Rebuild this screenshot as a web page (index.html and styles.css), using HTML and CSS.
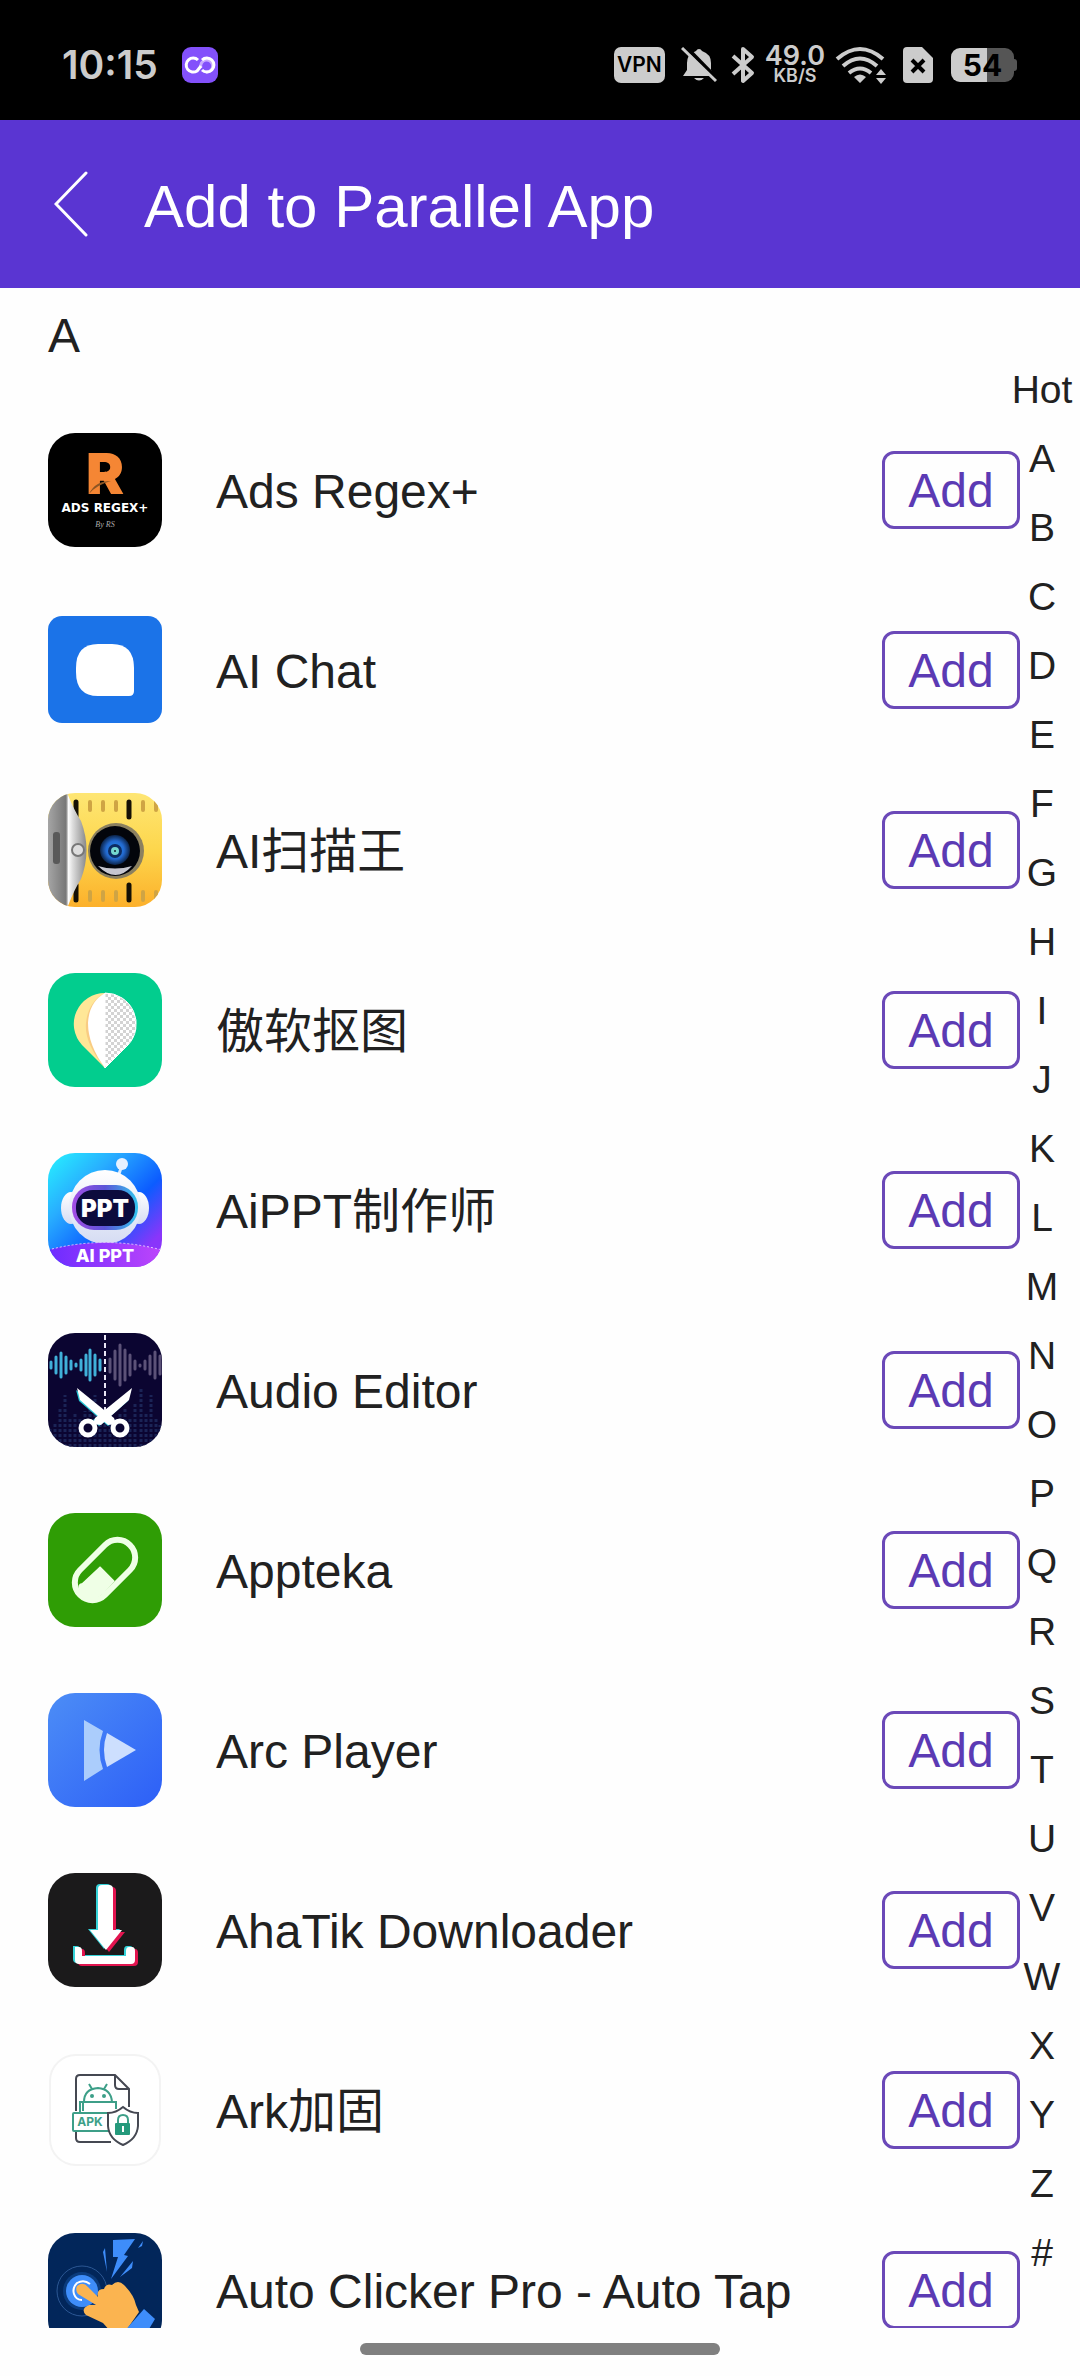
FILE: index.html
```
<!DOCTYPE html>
<html lang="en">

<head>
	<meta charset="UTF-8">
	<meta name="viewport" content="width=device-width, initial-scale=1.0">
	<title>Add to Parallel App</title>
	<link rel="stylesheet" href="styles.css">
</head>

<body>
	<!-- System status bar -->
	<div class="status-bar">
		<span class="clock">10:15</span>
		<svg class="status-app" width="36" height="36" viewBox="0 0 36 36">
			<rect width="36" height="36" rx="9" fill="#8351fb" />
			<g fill="none" stroke-width="3">
				<path d="M19 21a6 6 0 1 1 5 4" stroke="#c9abff" />
				<path d="M16 13a7 7 0 1 0-1 11l4-5" stroke="#fff" />
				<path d="M20 13a7 7 0 1 1 0 10" stroke="#fff" />
			</g>
		</svg>
		<div class="status-icons">
			<span class="vpn">VPN</span>
			<svg class="bell" width="36" height="36" viewBox="0 0 36 36">
				<path d="M18 2q2 0 3 2 9 3 9 12v7l3 6H2l4-6v-7q0-9 9-12 1-2 3-2z M13 31h10q-5 5-10 0z" fill="#ccc" />
				<path d="M3-2l34 35" stroke="#000" stroke-width="4" />
				<path d="M1 1l34 33" stroke="#ccc" stroke-width="3" />
			</svg>
			<svg class="bluetooth" width="24" height="38" viewBox="0 0 24 38">
				<path d="M2 10l19 17-9 8V3l9 8L2 28" fill="none" stroke="#ccc" stroke-width="4" stroke-linejoin="round" />
			</svg>
			<div class="speed">
				<span class="speed-value">49.0</span>
				<span class="speed-unit">KB/S</span>
			</div>
			<svg class="wifi" width="52" height="38" viewBox="0 0 52 38">
				<g fill="none" stroke="#ccc" stroke-width="4">
					<path d="M2 13q23-20 46 0" />
					<path d="M8 20q17-15 34 0" />
					<path d="M14 27q11-9 22 0" />
				</g>
				<path d="M19 31q6-5 12 0l-6 6z M46 23l5 6H41z M46 38l5-6H41z" fill="#ccc" />
			</svg>
			<svg class="sim" width="30" height="36" viewBox="0 0 30 36">
				<path d="M4 0h15l11 11v21q0 4-4 4H4q-4 0-4-4V4q0-4 4-4z" fill="#ccc" />
				<path d="M9 13l12 12M21 13L9 25" stroke="#000" stroke-width="4" />
			</svg>
			<div class="battery"><span class="battery-level">54</span></div>
		</div>
	</div>

	<header>
		<button class="back-btn" aria-label="Back">
			<svg width="34" height="66" viewBox="0 0 34 66">
				<path d="M32 2L2 33l30 31" fill="none" stroke="#fff" stroke-width="3" stroke-linecap="round" />
			</svg>
		</button>
		<h1>Add to Parallel App</h1>
	</header>

	<main>
		<div class="app-list">
			<h2 id="A">A</h2>

			<div class="app">
				<svg class="app-icon" viewBox="0 0 114 114">
					<rect width="114" height="114" rx="27" />
					<text class="regex-r" x="38" y="61">R</text>
					<path d="M41 61q6-13 22-13-15 4-22 13z" fill="#8c5524" />
					<text class="regex-name" x="57" y="79">ADS REGEX+</text>
					<text class="regex-by" x="57" y="94">By RS</text>
				</svg>
				<span class="app-name">Ads Regex+</span>
				<button class="add-btn">Add</button>
			</div>

			<div class="app">
				<svg class="app-icon" viewBox="0 0 114 114">
					<rect y="3" width="114" height="107" rx="14" fill="#1b73e8" />
					<path d="M50 31h14q22 0 22 24v23q0 5-5 5H50q-22 0-22-24v-4q0-24 22-24z" fill="#fff" />
				</svg>
				<span class="app-name">AI Chat</span>
				<button class="add-btn">Add</button>
			</div>

			<div class="app">
				<svg class="app-icon" viewBox="0 0 114 114">
					<defs>
						<clipPath id="round"><rect width="114" height="114" rx="27" /></clipPath>
						<linearGradient id="tape" x2="0" y2="1"><stop stop-color="#fee674" /><stop offset=".5" stop-color="#fdd64c" /><stop offset="1" stop-color="#fcb02b" /></linearGradient>
						<linearGradient id="metal"><stop stop-color="#a5a5a5" /><stop offset=".9" stop-color="#777" /><stop offset="1" stop-color="#ddd" /></linearGradient>
						<linearGradient id="flap"><stop stop-color="#fff" /><stop offset=".25" stop-color="#ddd" /><stop offset="1" stop-color="#888" /></linearGradient>
						<radialGradient id="lens"><stop offset=".2" stop-color="#2486e8" /><stop offset=".6" stop-color="#2369cf" /><stop offset="1" stop-color="#0b2348" /></radialGradient>
					</defs>
					<g clip-path="url(#round)">
						<rect width="114" height="114" fill="url(#tape)" />
						<g stroke="#cfa444" stroke-width="4" stroke-linecap="round">
							<path d="M42 9v8M55 9v8M68 9v8M95 9v8M108 9v8M42 99v8M55 99v8M68 99v8M95 99v8M108 99v8" />
							<path d="M28 9v14M81 9v15M28 92v15M81 92v15" stroke="#151005" stroke-width="5" />
						</g>
						<path d="M20 2q6 15 13 26 11 29 0 58-7 11-13 27z" fill="url(#flap)" />
						<rect width="20" height="114" fill="url(#metal)" />
						<rect x="5" y="39" width="7" height="32" rx="3" fill="#595959" />
						<circle cx="30" cy="57" r="6" fill="#ddd" stroke="#777" stroke-width="2" />
						<circle cx="68" cy="58" r="28" fill="#8b8060" />
						<circle cx="67" cy="58" r="25" fill="#03050b" />
						<path d="M50 73q17 5 34 0-16 18-34 0z" fill="#c6c6cf" />
						<circle cx="67" cy="57" r="15" fill="url(#lens)" />
						<circle cx="67" cy="58" r="7" fill="#0d2c63" />
						<circle cx="67" cy="58" r="4" fill="#74d6cf" />
						<circle cx="67" cy="58" r="1" fill="#123" />
					</g>
				</svg>
				<span class="app-name">AI扫描王</span>
				<button class="add-btn">Add</button>
			</div>

			<div class="app">
				<svg class="app-icon" viewBox="0 0 114 114">
					<defs>
						<pattern id="checks" width="6" height="6" patternUnits="userSpaceOnUse"><rect width="6" height="6" fill="#fff" /><path d="M0 0h3v3H0zM3 3h3v3H3z" fill="#d3d3d3" /></pattern>
					</defs>
					<rect width="114" height="114" rx="27" fill="#02cd8e" />
					<path d="M57 95L34 72a31 31 0 0 1 23-52z" fill="#ffe797" />
					<path d="M57 95Q36 70 38 50 40 29 57 20z" fill="#f9cc83" />
					<path d="M57 95Q40 72 40 50 41 29 57 20z" fill="#fff" />
					<path d="M57 95l23-23a31 31 0 0 0-23-52z" fill="url(#checks)" stroke="#fff" stroke-width="1" />
				</svg>
				<span class="app-name">傲软抠图</span>
				<button class="add-btn">Add</button>
			</div>

			<div class="app">
				<svg class="app-icon" viewBox="0 0 114 114">
					<defs>
						<linearGradient id="sky" x2="1" y2="1"><stop stop-color="#27f3ff" /><stop offset=".3" stop-color="#28adff" /><stop offset=".6" stop-color="#0c5cff" /><stop offset=".85" stop-color="#8a35fa" /></linearGradient>
						<linearGradient id="visor"><stop stop-color="#a34de5" /><stop offset=".5" stop-color="#5b55d8" /><stop offset="1" stop-color="#32c4ee" /></linearGradient>
						<linearGradient id="band"><stop stop-color="#6c2cff" /><stop offset="1" stop-color="#bd45fb" /></linearGradient>
						<linearGradient id="helmet" x2="0" y2="1"><stop stop-color="#fff" /><stop offset="1" stop-color="#d5dcf3" /></linearGradient>
					</defs>
					<g clip-path="url(#round)">
						<rect width="114" height="114" fill="url(#sky)" />
						<path d="M71 21l3-9" stroke="#dcecff" stroke-width="3" />
						<circle cx="74" cy="11" r="6" fill="#e8f1ff" />
						<ellipse cx="23" cy="55" rx="10" ry="16" fill="url(#helmet)" />
						<ellipse cx="91" cy="55" rx="10" ry="16" fill="url(#helmet)" />
						<ellipse cx="57" cy="54" rx="36" ry="37" fill="url(#helmet)" />
						<rect x="24" y="32" width="66" height="45" rx="22" fill="url(#visor)" />
						<rect x="28" y="37" width="59" height="36" rx="17" fill="#0c0b3d" />
						<text class="ppt-face" x="57" y="64">PPT</text>
						<path d="M0 97q57-15 114 0v17H0z" fill="url(#band)" />
						<path d="M0 97q57-15 114 0" fill="none" stroke="#e2c6ff" stroke-dasharray="2 2" />
						<text class="ppt-band" x="57" y="109">AI PPT</text>
					</g>
				</svg>
				<span class="app-name">AiPPT制作师</span>
				<button class="add-btn">Add</button>
			</div>

			<div class="app">
				<svg class="app-icon" viewBox="0 0 114 114">
					<g clip-path="url(#round)">
						<rect width="114" height="114" fill="#0b0531" />
						<path d="M2 114V96M7 114V90M12 114V74M17 114V62M22 114V84M27 114V80M32 114V84M37 114V78M42 114V70M47 114V62M52 114V78M57 114V84M62 114V88M67 114V84M72 114V80M77 114V76M82 114V84M87 114V70M93 114V54M98 114V80M103 114V62M108 114V84M112 114V92" stroke="#1b2456" stroke-width="3" stroke-dasharray="3 2" />
						<g stroke-width="3" stroke-linecap="round">
							<path d="M3 29v6M8 24v16M13 20v24M18 24v16M23 28v8M28 31v2M33 27v10M38 22v20M42 17v30M47 22v20M52 27v10" stroke="#40b0d9" />
							<path d="M62 26v13M67 18v28M72 12v40M77 17v30M82 22v20M87 28v8M92 32v1M97 28v8M102 23v18M107 19v26M112 23v18" stroke="#5c5278" />
						</g>
						<path d="M57 2v76" stroke="#e9e6f5" stroke-width="2" stroke-dasharray="5 3" />
						<g fill="#26c5d4" transform="translate(-1 1)">
							<path d="M29 56l38 30-6 6-29-25zM84 56L46 86l6 6 29-25z" />
						</g>
						<path d="M29 55l37 30 2 6-8 1-28-25z" fill="#fff" />
						<path d="M84 55L47 85l-2 6 8 1 28-25z" fill="#fff" />
						<circle cx="40" cy="95" r="7" fill="#0b0531" stroke="#fff" stroke-width="5" />
						<circle cx="72" cy="95" r="7" fill="#0b0531" stroke="#fff" stroke-width="5" />
					</g>
				</svg>
				<span class="app-name">Audio Editor</span>
				<button class="add-btn">Add</button>
			</div>

			<div class="app">
				<svg class="app-icon" viewBox="0 0 114 114">
					<rect width="114" height="114" rx="27" fill="#2f9d05" />
					<g fill="none" stroke="#efffe6" stroke-width="6">
						<path d="M32 57l25-25a17 17 0 0 1 25 25L57 82a17 17 0 0 1-25-25z" />
						<path d="M52 56l12 12-10 11q-10 9-19 1-5-8 0-8z" fill="#efffe6" stroke-width="4" />
					</g>
				</svg>
				<span class="app-name">Appteka</span>
				<button class="add-btn">Add</button>
			</div>

			<div class="app">
				<svg class="app-icon" viewBox="0 0 114 114">
					<defs>
						<linearGradient id="arc" x2="1" y2="1"><stop stop-color="#4c8df6" /><stop offset="1" stop-color="#2d5ff7" /></linearGradient>
					</defs>
					<rect width="114" height="114" rx="27" fill="url(#arc)" />
					<path d="M36 27l19 11q-7 19 0 38L36 88z" fill="#abcdfc" />
					<path d="M59 40l29 17-29 17q-6-17 0-34z" fill="#cddffe" />
				</svg>
				<span class="app-name">Arc Player</span>
				<button class="add-btn">Add</button>
			</div>

			<div class="app">
				<svg class="app-icon" viewBox="0 0 114 114">
					<defs>
						<g id="download">
							<path d="M54 12h7q4 0 4 4v41h9L58 77 42 57h8V16q0-4 4-4z" />
							<path d="M27 74h4q3 0 3 4v5h44v-5q0-4 3-4h3q3 0 3 4v9q0 4-4 4H31q-4 0-4-4z" />
						</g>
					</defs>
					<rect width="114" height="114" rx="27" fill="#1b1a1b" />
					<use href="#download" x="-2" y="-1" fill="#35d3d9" />
					<use href="#download" x="3" y="2" fill="#e2144f" />
					<use href="#download" fill="#fff" />
				</svg>
				<span class="app-name">AhaTik Downloader</span>
				<button class="add-btn">Add</button>
			</div>

			<div class="app">
				<svg class="app-icon" viewBox="0 0 114 114">
					<rect x="2" y="2" width="110" height="110" rx="26" fill="#fff" stroke="#f3f3f3" stroke-width="2" />
					<g fill="none" stroke="#454852" stroke-width="2">
						<path d="M28 58V26q0-4 4-4h35l14 14v18M67 22v10q0 4 4 4h10M28 79v6q0 4 4 4h31" />
						<path d="M35 58V49h30M65 49h3v7M35 49h-3v10M36 49q0-13 14-14 13 1 14 14M41 31l3 5M59 31l-3 5" stroke="#3d9f88" />
						<rect x="25" y="60" width="40" height="18" rx="1" fill="#fff" stroke="#3d9f88" />
						<path d="M75 54q7 6 15 6v13q-1 13-15 19-14-6-15-19V60q8 0 15-6z" fill="#fff" />
						<path d="M70 71v-4q0-5 5-5t5 5v4" stroke="#3d9f88" />
					</g>
					<circle cx="44" cy="43" r="2" fill="#3d9f88" />
					<circle cx="56" cy="43" r="2" fill="#3d9f88" />
					<rect x="67" y="70" width="15" height="12" rx="1" fill="#259a7c" />
					<path d="M75 73v6" stroke="#fff" stroke-width="2" />
					<text class="apk" x="42" y="73">APK</text>
				</svg>
				<span class="app-name">Ark加固</span>
				<button class="add-btn">Add</button>
			</div>

			<div class="app">
				<svg class="app-icon" viewBox="0 0 114 114">
					<g clip-path="url(#round)">
						<rect width="114" height="114" fill="#02265a" />
						<path d="M65 7l22-1-11 16 4 1-17 23 7-22h-5zM55 19l2-4 2 24zM72 44l13-16-1 7zM90 15l5-7-1 5z" fill="#3e8dfa" />
						<circle cx="34" cy="58" r="25" fill="none" stroke="#2c5793" />
						<circle cx="34" cy="58" r="19" fill="#0b3b7c" />
						<circle cx="34" cy="58" r="16" fill="#3e8dfa" />
						<path d="M29 53q6-5 11 1l10 10q-2-8 6-8 2-6 8-4 6-6 12 0 10 10 12 20l3 7-14 20H63l-8-9-17-8q-6-6 3-10h7L30 61q-3-4-1-8z" fill="#fbb450" />
						<path d="M42 51q-6-5-13-1-5 5-3 11 2 6 8 6" fill="none" stroke="#fff" stroke-width="2" />
						<path d="M96 76l11 10-9 15H74l7-8z" fill="#3e8dfa" />
					</g>
				</svg>
				<span class="app-name">Auto Clicker Pro - Auto Tap</span>
				<button class="add-btn">Add</button>
			</div>
		</div>

		<!-- Alphabet index over the right edge of the list -->
		<nav class="index">
			<a href="#hot">Hot</a>
			<a href="#A">A</a>
			<a href="#B">B</a>
			<a href="#C">C</a>
			<a href="#D">D</a>
			<a href="#E">E</a>
			<a href="#F">F</a>
			<a href="#G">G</a>
			<a href="#H">H</a>
			<a href="#I">I</a>
			<a href="#J">J</a>
			<a href="#K">K</a>
			<a href="#L">L</a>
			<a href="#M">M</a>
			<a href="#N">N</a>
			<a href="#O">O</a>
			<a href="#P">P</a>
			<a href="#Q">Q</a>
			<a href="#R">R</a>
			<a href="#S">S</a>
			<a href="#T">T</a>
			<a href="#U">U</a>
			<a href="#V">V</a>
			<a href="#W">W</a>
			<a href="#X">X</a>
			<a href="#Y">Y</a>
			<a href="#Z">Z</a>
			<a href="#other">#</a>
		</nav>
	</main>

	<footer>
		<div class="home-pill"></div>
	</footer>
</body>

</html>
```
FILE: styles.css
```
* {
	margin: 0;
	padding: 0;
	box-sizing: border-box;
}

body {
	display: flex;
	flex-direction: column;
	height: 100vh;
	background-color: #fefefe;
	color: #212121;
	font-family: "Liberation Sans", "Noto Sans CJK SC", sans-serif;
	font-size: 48px;
}

button {
	font: inherit;
	background: none;
	border: none;
	cursor: pointer;
}

svg {
	display: block;
	flex: none;
}

/* Status bar */
.status-bar {
	display: flex;
	align-items: center;
	flex: none;
	height: 120px;
	padding: 10px 66px 0 62px;
	background-color: #000;
	color: #ccc;
	font-family: Inter, sans-serif;
}

.clock {
	font-size: 39px;
	font-weight: 600;
	line-height: 48px;
}

.status-app {
	margin-left: 24px;
}

.status-icons {
	display: flex;
	align-items: center;
	margin-left: auto;
}

.vpn {
	width: 51px;
	border-radius: 7px;
	background-color: #ccc;
	color: #000;
	font-size: 21px;
	font-weight: 600;
	line-height: 36px;
	text-align: center;
}

.bell {
	margin-left: 16px;
}

.bluetooth {
	margin-left: 14px;
}

.speed {
	display: flex;
	flex-direction: column;
	align-items: center;
	margin-left: 10px;
	font-weight: 600;
}

.speed-value {
	font-size: 27px;
	line-height: 22px;
}

.speed-unit {
	font-size: 18px;
	line-height: 18px;
}

.wifi {
	margin-left: 10px;
}

.sim {
	margin-left: 16px;
}

.battery {
	position: relative;
	width: 63px;
	height: 34px;
	margin-left: 18px;
	border-radius: 9px;
	background: linear-gradient(to right, #ccc 57%, #555 57%);
	color: #000;
	font-size: 30px;
	font-weight: 700;
	line-height: 34px;
	text-align: center;
}

.battery::after {
	content: "";
	position: absolute;
	top: 11px;
	right: -3px;
	width: 3px;
	height: 12px;
	border-radius: 0 3px 3px 0;
	background-color: #555;
}

/* Title bar */
header {
	display: flex;
	align-items: center;
	flex: none;
	height: 168px;
	padding-left: 54px;
	background-color: #5a35d2;
	color: #fff;
}

h1 {
	margin-left: 56px;
	padding-top: 4px;
	font-size: 60px;
	font-weight: 400;
}

/* App list */
main {
	position: relative;
	flex: 1;
	min-height: 0;
}

.app-list {
	height: 100%;
	padding: 0 60px 0 48px;
	overflow-y: auto;
	scrollbar-width: none;
}

h2 {
	height: 112px;
	font-size: 48px;
	font-weight: 400;
	line-height: 96px;
}

.app {
	display: flex;
	align-items: center;
	height: 180px;
}

.app-icon {
	width: 114px;
	height: 114px;
	margin-right: 54px;
}

.app-name {
	flex: 1;
	padding-top: 4px;
	line-height: 60px;
}

.add-btn {
	width: 138px;
	height: 78px;
	border: 3px solid #6b49b8;
	border-radius: 12px;
	color: #5b3ab4;
}

/* Lettering inside the icons */
.app-icon text {
	font-family: Inter, sans-serif;
}

.regex-r {
	fill: #f58634;
	font-size: 57px;
	font-weight: 900;
}

.app-icon .regex-name {
	fill: #fff;
	font-family: "DejaVu Sans", sans-serif;
	font-size: 12px;
	font-weight: 700;
	text-anchor: middle;
}

.app-icon .regex-by {
	fill: #aaa;
	font-family: "Liberation Serif", serif;
	font-size: 8px;
	font-style: italic;
	text-anchor: middle;
}

.ppt-face {
	fill: #fff;
	font-size: 24px;
	font-weight: 900;
	text-anchor: middle;
}

.ppt-band {
	fill: #fff;
	font-size: 18px;
	font-weight: 800;
	text-anchor: middle;
}

.apk {
	fill: #3d9f88;
	font-size: 12px;
	font-weight: 700;
	text-anchor: middle;
}

/* Alphabet index */
.index {
	position: absolute;
	top: 67px;
	right: 0;
	display: flex;
	flex-direction: column;
	width: 76px;
	text-align: center;
}

.index a {
	color: #212121;
	font-size: 39px;
	line-height: 69px;
	text-decoration: none;
}

/* Gesture bar */
footer {
	display: flex;
	justify-content: center;
	align-items: center;
	flex: none;
	height: 48px;
	padding-bottom: 6px;
}

.home-pill {
	width: 360px;
	height: 12px;
	border-radius: 6px;
	background-color: #808080;
}
```
